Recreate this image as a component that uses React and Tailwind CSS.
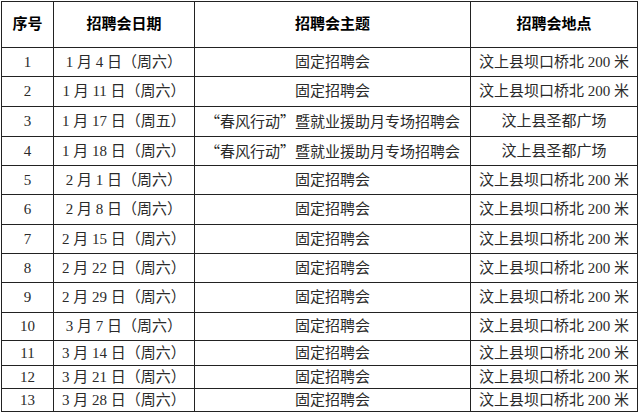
const q = (s) => <span className="font-['Noto_Sans_CJK_SC',sans-serif]">{s}</span>;

const spring = (
  <>
    {q("“")}春风行动{q("”")}暨就业援助月专场招聘会
  </>
);

const rows = [
  { no: "1", date: "1 月 4 日（周六）", theme: "固定招聘会", place: "汶上县坝口桥北 200 米", h: "h-[29px]" },
  { no: "2", date: "1 月 11 日（周六）", theme: "固定招聘会", place: "汶上县坝口桥北 200 米", h: "h-[30px]" },
  { no: "3", date: "1 月 17 日（周五）", theme: spring, place: "汶上县圣都广场", h: "h-[30px]" },
  { no: "4", date: "1 月 18 日（周六）", theme: spring, place: "汶上县圣都广场", h: "h-[29px]" },
  { no: "5", date: "2 月 1 日（周六）", theme: "固定招聘会", place: "汶上县坝口桥北 200 米", h: "h-[29px]" },
  { no: "6", date: "2 月 8 日（周六）", theme: "固定招聘会", place: "汶上县坝口桥北 200 米", h: "h-[30px]" },
  { no: "7", date: "2 月 15 日（周六）", theme: "固定招聘会", place: "汶上县坝口桥北 200 米", h: "h-[29px]" },
  { no: "8", date: "2 月 22 日（周六）", theme: "固定招聘会", place: "汶上县坝口桥北 200 米", h: "h-[29px]" },
  { no: "9", date: "2 月 29 日（周六）", theme: "固定招聘会", place: "汶上县坝口桥北 200 米", h: "h-[30px]" },
  { no: "10", date: "3 月 7 日（周六）", theme: "固定招聘会", place: "汶上县坝口桥北 200 米", h: "h-[28px]" },
  { no: "11", date: "3 月 14 日（周六）", theme: "固定招聘会", place: "汶上县坝口桥北 200 米", h: "h-[25px]" },
  { no: "12", date: "3 月 21 日（周六）", theme: "固定招聘会", place: "汶上县坝口桥北 200 米", h: "h-[23px]" },
  { no: "13", date: "3 月 28 日（周六）", theme: "固定招聘会", place: "汶上县坝口桥北 200 米", h: "h-[23px]" },
];

const cell = "border border-[#222] text-center p-0 leading-none";

export default function App() {
  return (
    <div className="w-[640px] h-[413px] bg-white overflow-hidden pt-[1px] pl-[1px] font-['Liberation_Serif','Noto_Sans_CJK_SC',serif] text-[15px] text-[#2a2a2a]">
      <table className="border-collapse table-fixed w-[636px]">
        <colgroup>
          <col className="w-[52px]" />
          <col className="w-[141px]" />
          <col className="w-[276px]" />
          <col className="w-[167px]" />
        </colgroup>
        <thead>
          {/* Header */}
          <tr className="h-[46px] font-bold text-black">
            <th className={cell}>序号</th>
            <th className={cell}>招聘会日期</th>
            <th className={cell}>招聘会主题</th>
            <th className={cell}>招聘会地点</th>
          </tr>
        </thead>
        <tbody>
          {rows.map((r) => (
            <tr key={r.no} className={r.h}>
              <td className={cell}>{r.no}</td>
              <td className={cell}>{r.date}</td>
              <td className={cell}>{r.theme}</td>
              <td className={cell}>{r.place}</td>
            </tr>
          ))}
        </tbody>
      </table>
    </div>
  );
}
